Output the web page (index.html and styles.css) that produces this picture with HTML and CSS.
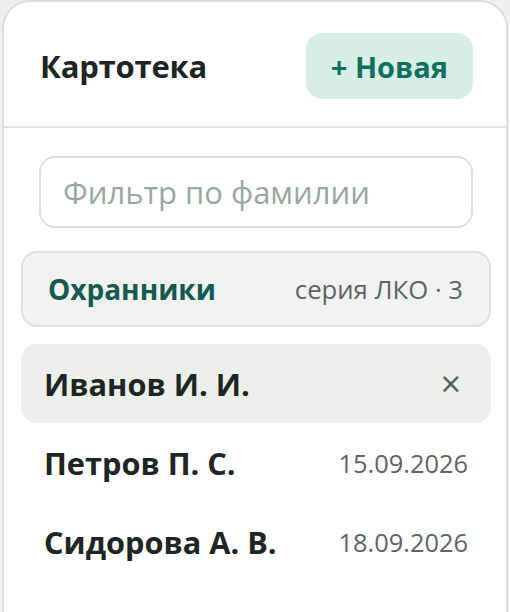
FILE: index.html
```html
<!DOCTYPE html>
<html lang="ru">
<head>
<meta charset="UTF-8">
<title>Картотека</title>
<link rel="stylesheet" href="styles.css">
</head>
<body>
<div class="panel">
    <div class="panel-head">
        <div class="title">Картотека</div>
        <button class="btn-new">+ Новая</button>
    </div>
    <div class="panel-body">
        <input type="text" class="filter" placeholder="Фильтр по фамилии">
        <div class="group">
            <div class="group-name">Охранники</div>
            <div class="group-meta">серия ЛКО · 3</div>
        </div>
        <div class="list">
            <div class="row selected">
                <div class="name">Иванов И. И.</div>
                <button class="close">&times;</button>
            </div>
            <div class="row">
                <div class="name">Петров П. С.</div>
                <div class="date">15.09.2026</div>
            </div>
            <div class="row">
                <div class="name">Сидорова А. В.</div>
                <div class="date">18.09.2026</div>
            </div>
        </div>
    </div>
</div>
</body>
</html>
```

FILE: styles.css
```css
body, html {
    height: 100%;
    margin: 0;
    font-family: "Open Sans", sans-serif;
    background-color: #f0f1ee;
    overflow: hidden;
}
.panel {
    margin: 0 2px;
    height: 640px;
    background: #fff;
    border: 2px solid #dcdfdb;
    border-bottom: none;
    border-radius: 28px 28px 0 0;
}
.panel-head {
    display: flex;
    justify-content: space-between;
    align-items: center;
    padding: 31px 33px 27px 36px;
    border-bottom: 2px solid #e1e4e0;
}
.title {
    font-size: 31px;
    font-weight: 700;
    letter-spacing: -0.2px;
    color: #1b2521;
}
.btn-new {
    height: 66px;
    padding: 0 25px;
    border: none;
    border-radius: 16px;
    background: #d8efe8;
    color: #0f7060;
    font-family: inherit;
    font-size: 29px;
    font-weight: 700;
    cursor: pointer;
}
.panel-body {
    padding: 28px 15px 0 17px;
    display: flex;
    flex-direction: column;
}
.filter {
    margin: 0 18px;
    height: 72px;
    box-sizing: border-box;
    padding: 0 22px;
    border: 2px solid #dde1dd;
    border-radius: 16px;
    font-family: inherit;
    font-size: 31px;
    color: #1b2521;
    outline: none;
}
.filter::placeholder {
    color: #97a8a1;
}
.group {
    margin-top: 23px;
    height: 76px;
    box-sizing: border-box;
    display: flex;
    justify-content: space-between;
    align-items: center;
    padding: 0 26px 0 25px;
    background: #f2f2f0;
    border: 2px solid #dfe2df;
    border-radius: 16px;
}
.group-name {
    font-size: 28px;
    font-weight: 700;
    color: #135a50;
}
.group-meta {
    font-size: 25.7px;
    color: #5b6662;
}
.list {
    margin-top: 17px;
}
.row {
    height: 79px;
    display: flex;
    justify-content: space-between;
    align-items: center;
    padding: 0 23px;
    border-radius: 16px;
}
.row.selected {
    background: #edefeb;
}
.name {
    font-size: 30.7px;
    font-weight: 700;
    color: #1d2622;
}
.date {
    font-size: 25.4px;
    color: #5b6662;
}
.close {
    border: none;
    background: none;
    padding: 0 7px 0 0;
    font-family: inherit;
    font-size: 36px;
    line-height: 1;
    color: #55625d;
    cursor: pointer;
}
```
